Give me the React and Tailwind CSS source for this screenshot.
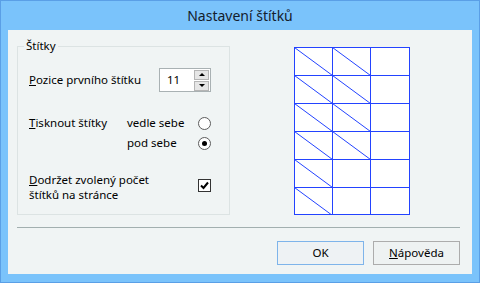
import React from 'react'

const font = { fontFamily: '"Noto Sans", "Open Sans", sans-serif' }

const rows = [
  [true, true],
  [true, true],
  [true, true],
  [true, true],
  [true, false],
  [true, false]
]

function LabelGrid() {
  return (
    <svg width="116" height="168" viewBox="0 0 116 168" className="block">
      <rect x="0.5" y="0.5" width="115" height="167" fill="#ffffff" stroke="#2343ff" />
      {rows.map((r, i) => {
        const y = 0.5 + i * 28
        return (
          <g key={i}>
            {r[0] && <line x1="0.5" y1={y} x2="38.5" y2={y + 28} stroke="#2343ff" />}
            {r[1] && <line x1="38.5" y1={y} x2="76.5" y2={y + 28} stroke="#2343ff" />}
            {i > 0 && <line x1="0" y1={y} x2="116" y2={y} stroke="#2343ff" />}
          </g>
        )
      })}
      <line x1="38.5" y1="0" x2="38.5" y2="168" stroke="#2343ff" />
      <line x1="76.5" y1="0" x2="76.5" y2="168" stroke="#2343ff" />
    </svg>
  )
}

function Radio({ checked }) {
  return (
    <div className="w-[13px] h-[13px] rounded-full border border-[#5c5c5c] bg-white flex items-center justify-center">
      {checked && <div className="w-[5px] h-[5px] rounded-full bg-black" />}
    </div>
  )
}

export default function App() {
  return (
    <div
      className="w-[480px] h-[283px] bg-[#7ac3fb] border border-[#5a9fe6] flex flex-col text-[11.5px] text-black"
      style={font}
    >
      {/* Title bar */}
      <div className="h-[29px] flex items-center justify-center text-[14px] text-[#14202c]">
        Nastavení štítků
      </div>

      {/* Client area */}
      <div className="mx-[7px] h-[244px] bg-[#f0f4f4] flex flex-col">
        <div className="flex pt-[16px] pl-[9px]">
          {/* Group box */}
          <div className="relative w-[213px] h-[169px] border border-[#dce3e3] flex flex-col pl-[11px]">
            <span className="absolute -top-[10px] left-[6px] px-[2px] bg-[#f0f4f4] leading-[18px]">
              Štítky
            </span>

            <div className="mt-[21px] h-[24px] flex items-center">
              <span className="w-[130px]">
                <u>P</u>ozice prvního štítku
              </span>
              <div className="w-[52px] h-[24px] border border-[#a9b1b3] bg-white flex items-center">
                <span className="pl-[7px] flex-1">11</span>
                <div className="flex flex-col gap-[1px] mr-[1px]">
                  <div className="w-[15px] h-[10px] bg-[#e6e6e6] border border-[#b5b5b5] flex items-center justify-center">
                    <div className="w-0 h-0 border-l-[3px] border-r-[3px] border-b-[3px] border-l-transparent border-r-transparent border-b-black" />
                  </div>
                  <div className="w-[15px] h-[10px] bg-[#e6e6e6] border border-[#b5b5b5] flex items-center justify-center">
                    <div className="w-0 h-0 border-l-[3px] border-r-[3px] border-t-[3px] border-l-transparent border-r-transparent border-t-black" />
                  </div>
                </div>
              </div>
            </div>

            <div className="mt-[21px] flex">
              <span className="w-[98px] h-[20px] flex items-center">
                <u>T</u>isknout štítky
              </span>
              <div className="flex flex-col">
                <div className="h-[20px] flex items-center">
                  <span className="w-[71px]">vedle sebe</span>
                  <Radio />
                </div>
                <div className="h-[20px] flex items-center">
                  <span className="w-[71px]">pod sebe</span>
                  <Radio checked />
                </div>
              </div>
            </div>

            <div className="mt-[19px] flex">
              <div className="w-[169px] leading-[15px]">
                <u>D</u>održet zvolený počet
                <br />
                štítků na stránce
              </div>
              <div className="mt-[7px] w-[13px] h-[13px] border border-[#333] bg-white flex items-center justify-center">
                <svg width="9" height="9" viewBox="0 0 9 9">
                  <path d="M1 4.5 L3.5 7 L8 1.5" fill="none" stroke="#000" strokeWidth="2" />
                </svg>
              </div>
            </div>
          </div>

          <div className="ml-[64px] pt-[1px]">
            <LabelGrid />
          </div>
        </div>

        {/* Separator */}
        <div className="ml-[9px] mt-[12px] w-[443px] h-px bg-[#a2afaf]" />

        {/* Buttons */}
        <div className="mt-[13px] flex justify-end pr-[12px] gap-[9px]">
          <button className="w-[87px] h-[24px] border border-[#7eb4ea] bg-[#eef2f4] flex items-center justify-center">
            OK
          </button>
          <button className="w-[87px] h-[24px] border border-[#acacac] bg-[#eef2f2] flex items-center justify-center">
            <span>
              <u>N</u>ápověda
            </span>
          </button>
        </div>
      </div>
    </div>
  )
}
